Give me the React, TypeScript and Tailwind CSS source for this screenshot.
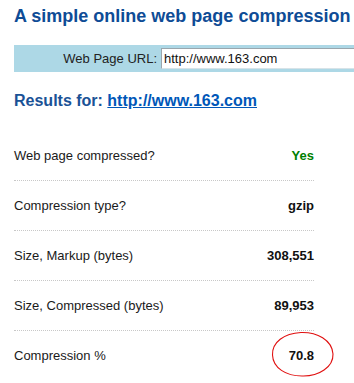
import React from 'react';

const ROWS = [
  { label: 'Web page compressed?', value: 'Yes', green: true },
  { label: 'Compression type?', value: 'gzip' },
  { label: 'Size, Markup (bytes)', value: '308,551' },
  { label: 'Size, Compressed (bytes)', value: '89,953' },
  { label: 'Compression %', value: '70.8', circled: true },
];

export default function App() {
  return (
    <div className="w-[354px] h-[383px] overflow-hidden bg-white pl-[14px] pt-[5px] font-['Liberation_Sans',Arial,sans-serif] text-[13px] text-[#1a1a1a]">
      <h1 className="whitespace-nowrap text-[18px] leading-[22px] font-bold text-[#0e4c96]">
        A simple online web page compression tool
      </h1>

      <div className="mt-[18px] h-[27px] flex items-center bg-[#add8e6] whitespace-nowrap">
        <span className="w-[143px] shrink-0 text-right text-[13px] text-[#222]">Web Page URL:</span>
        <div className="ml-[4px] h-[21px] w-[260px] shrink-0 bg-white border border-[#9aa6ad] border-b-[#d7e3e8] border-r-[#d7e3e8] flex items-center pl-[2px] text-[13px] text-[#111]">
          http://www.163.com
        </div>
      </div>

      <h2 className="mt-[19px] text-[16px] leading-[20px] font-bold text-[#1a5296] whitespace-nowrap">
        Results for: <a href="#" className="text-[#0057b8] underline">http://www.163.com</a>
      </h2>

      <div className="mt-[20px] w-[300px]">
        {ROWS.map((r, i) => (
          <div
            key={i}
            className={`relative h-[50px] flex items-center justify-between ${i < ROWS.length - 1 ? 'border-b border-dotted border-[#c8c8c8]' : ''}`}
          >
            <span className="text-[#1a1a1a]">{r.label}</span>
            <span className={`font-bold ${r.green ? 'text-[#008000]' : 'text-[#111]'}`}>{r.value}</span>
            {r.circled && (
              <svg className="absolute left-[257px] top-[0px]" width="64" height="47" viewBox="0 0 64 47" fill="none">
                <path
                  d="M30 1.5 C46 1, 61 9, 62 23 C62.5 36, 48 45.5, 31 45 C15 45, 2 37, 1.5 24 C1 11, 13 2.5, 30 1.5 Z"
                  stroke="#e01010"
                  strokeWidth="1.1"
                />
              </svg>
            )}
          </div>
        ))}
      </div>
    </div>
  );
}
